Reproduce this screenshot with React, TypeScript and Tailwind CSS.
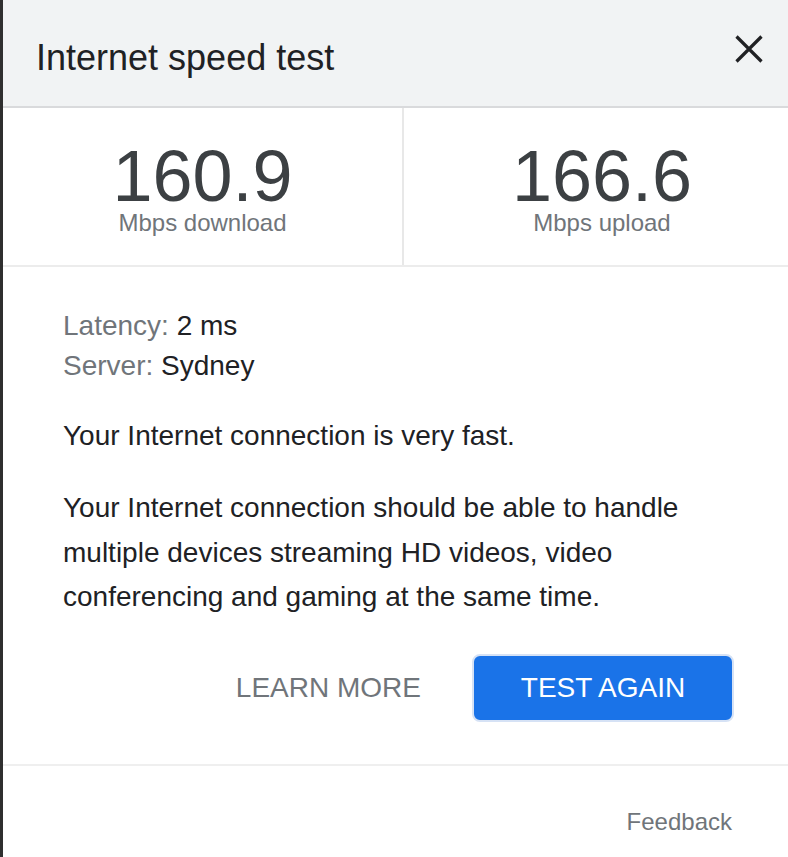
import React from "react";

export default function App() {
  return (
    <div className="w-[788px] h-[857px] overflow-hidden bg-white flex font-['Liberation_Sans',Arial,sans-serif]">
      <div className="w-[3px] shrink-0 bg-[#2f2f2f]" />
      <div className="w-[797px] shrink-0 flex flex-col">
        <div className="h-[108px] border-b-2 border-[#d9dadc] bg-[#f1f3f4] flex items-start justify-between pl-[33px] pr-[37px] pt-[38px]">
          <h1 className="text-[36px] leading-[40px] text-[#202124]">Internet speed test</h1>
          <svg className="mt-[-3px]" width="28" height="28" viewBox="0 0 28 28" fill="none">
            <path d="M1.5 1.5L26.5 26.5M26.5 1.5L1.5 26.5" stroke="#202124" strokeWidth="3.2" />
          </svg>
        </div>
        <div className="grid grid-cols-[401px_1fr] border-b-2 border-[#ececec]">
          <div className="border-r-2 border-[#e8e8e8] pt-[33px] pb-[30px] flex flex-col items-center">
            <div className="text-[72px] leading-[70px] text-[#3c4043]">160.9</div>
            <div className="text-[24px] leading-[24px] text-[#70757a]">Mbps download</div>
          </div>
          <div className="pt-[33px] pb-[30px] flex flex-col items-center">
            <div className="text-[72px] leading-[70px] text-[#3c4043]">166.6</div>
            <div className="text-[24px] leading-[24px] text-[#70757a]">Mbps upload</div>
          </div>
        </div>
        <div className="pl-[60px] pr-[66px] pt-[39px] pb-[42px] border-b-2 border-[#efefef] text-[28px] text-[#202124]">
          <div className="leading-[40px]">
            <div>
              <span className="text-[#70757a]">Latency:</span> 2 ms
            </div>
            <div>
              <span className="text-[#70757a]">Server:</span> Sydney
            </div>
          </div>
          <p className="mt-[30px] leading-[40px]">Your Internet connection is very fast.</p>
          <p className="mt-[30px] leading-[44.5px]">
            Your Internet connection should be able to handle multiple devices streaming HD videos, video conferencing and gaming at the same time.
          </p>
          <div className="mt-[34px] flex justify-end items-center gap-[51px]">
            <button className="text-[28px] leading-[32px] text-[#70757a]">LEARN MORE</button>
            <button className="w-[262px] h-[68px] rounded-[8px] bg-[#1a73e8] border-2 border-[#d6e2f5] text-white text-[28px] leading-[32px]">
              TEST AGAIN
            </button>
          </div>
        </div>
        <div className="flex justify-end pr-[68px] pt-[44px]">
          <span className="text-[24px] leading-[24px] text-[#70757a]">Feedback</span>
        </div>
      </div>
    </div>
  );
}
